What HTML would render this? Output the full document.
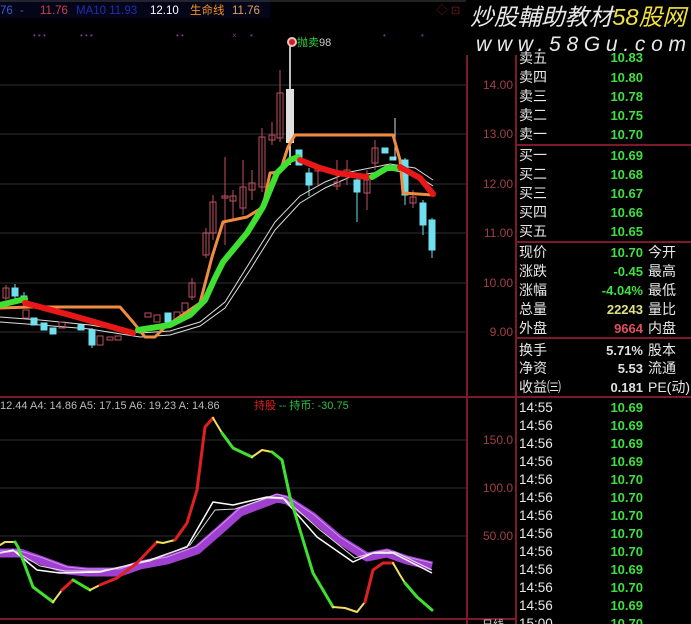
<!DOCTYPE html>
<html><head><meta charset="utf-8"><style>
html,body{margin:0;padding:0;background:#000;width:691px;height:624px;overflow:hidden}
svg{display:block}
text{font-family:"Liberation Sans","Noto Sans CJK SC",sans-serif}
</style></head><body>
<svg width="691" height="624" viewBox="0 0 691 624" xmlns="http://www.w3.org/2000/svg">
<rect width="691" height="624" fill="#000"/>
<rect x="0" y="0" width="270" height="18" fill="#05051a"/>
<line x1="0" y1="1" x2="466" y2="1" stroke="#444" stroke-width="1"/>
<g font-size="11.5">
<text x="0" y="14" fill="#3a5ad0">76</text>
<text x="20" y="14" fill="#666">-</text>
<text x="40" y="14" fill="#d04040">11.76</text>
<text x="76" y="14" fill="#1e2eb0">MA10  11.93</text>
<text x="150" y="14" fill="#fff">12.10</text>
<text x="190" y="14" fill="#f09020">生命线</text>
<text x="232" y="14" fill="#e0a060">11.76</text>
<text x="436" y="14" fill="#701818">◇ ⊡</text>
</g>
<g stroke="#181818" stroke-width="2">
<line x1="0" y1="85" x2="466" y2="85"/><line x1="0" y1="134" x2="466" y2="134"/>
<line x1="0" y1="184" x2="466" y2="184"/><line x1="0" y1="233" x2="466" y2="233"/>
<line x1="0" y1="283" x2="466" y2="283"/><line x1="0" y1="332" x2="466" y2="332"/>
<line x1="0" y1="440" x2="466" y2="440"/><line x1="0" y1="488" x2="466" y2="488"/><line x1="0" y1="536" x2="466" y2="536"/>
</g>
<g stroke="#7a1a2a" stroke-width="2">
<line x1="467" y1="55" x2="467" y2="624"/>
<line x1="516" y1="55" x2="516" y2="624"/>
<line x1="0" y1="397" x2="691" y2="397"/>
<line x1="0" y1="619" x2="516" y2="619"/>
<line x1="516" y1="145" x2="691" y2="145"/>
<line x1="516" y1="242" x2="691" y2="242"/>
<line x1="516" y1="338" x2="691" y2="338"/>
</g>
<g font-size="12" fill="#a04048" text-anchor="end">
<text x="513" y="89">14.00</text><text x="513" y="138">13.00</text><text x="513" y="188">12.00</text>
<text x="513" y="237">11.00</text><text x="513" y="287">10.00</text><text x="513" y="336">9.00</text>
<text x="513" y="444">150.0</text><text x="513" y="492">100.0</text><text x="513" y="540">50.00</text>
</g>
<g fill="#8030a0" font-size="8">
<text x="33" y="38">• • •</text><text x="80" y="38">• • •</text><text x="176" y="38">• •</text>
<text x="232" y="38">×</text><text x="250" y="38">•</text><text x="383" y="38">•</text><text x="421" y="38">•</text>
</g>
<g fill="none" stroke="#ddd" stroke-width="1">
<polyline points="0,317 40,320 90,325 140,333 170,331 200,322 225,302 250,262 275,222 300,196 325,182 350,172 390,164 415,168 433,180"/>
<polyline points="0,322 40,325 90,329 140,337 170,335 200,326 225,308 250,270 275,230 300,203 325,188 350,177 390,170 415,174 433,186"/>
</g>
<g stroke="#c05060" stroke-width="1" fill="none">
<line x1="6" y1="285" x2="6" y2="300"/><rect x="3" y="288" width="6" height="10"/>
<rect x="23" y="310" width="6" height="8"/>
<rect x="59" y="322" width="6" height="6"/><rect x="97" y="336" width="6" height="9"/>
<rect x="107" y="337" width="6" height="3"/><rect x="115" y="336" width="6" height="4"/>
<rect x="145" y="313" width="6" height="4"/><rect x="154" y="315" width="6" height="7"/>
<rect x="174" y="312" width="6" height="11"/><rect x="182" y="303" width="6" height="9"/>
<line x1="192" y1="278" x2="192" y2="300"/><rect x="189" y="283" width="6" height="14"/>
<line x1="206" y1="228" x2="206" y2="258"/><rect x="203" y="233" width="6" height="22"/>
<line x1="213" y1="195" x2="213" y2="240"/><rect x="210" y="202" width="6" height="31"/>
<line x1="225" y1="157" x2="225" y2="245"/><rect x="222" y="196" width="6" height="2"/>
<line x1="233" y1="190" x2="233" y2="220"/><rect x="230" y="196" width="6" height="5"/>
<line x1="243" y1="160" x2="243" y2="215"/><rect x="240" y="187" width="6" height="21"/>
<line x1="252" y1="170" x2="252" y2="200"/><rect x="249" y="183" width="6" height="7"/>
<line x1="262" y1="128" x2="262" y2="192"/><rect x="259" y="137" width="6" height="50"/>
<line x1="272" y1="122" x2="272" y2="145"/><rect x="269" y="135" width="6" height="5"/>
<line x1="280" y1="70" x2="280" y2="142"/><rect x="277" y="93" width="6" height="45"/>
<line x1="318" y1="165" x2="318" y2="185"/><rect x="315" y="167" width="6" height="4"/>
<line x1="337" y1="160" x2="337" y2="190"/><rect x="334" y="182" width="6" height="4"/>
<line x1="347" y1="160" x2="347" y2="185"/><rect x="344" y="170" width="6" height="4"/>
<line x1="367" y1="170" x2="367" y2="210"/><rect x="364" y="180" width="6" height="13"/>
<line x1="375" y1="140" x2="375" y2="170"/><rect x="372" y="148" width="6" height="15"/>
<line x1="413" y1="190" x2="413" y2="208"/><rect x="410" y="197" width="6" height="6"/>
</g>
<g fill="#70e0f0" stroke="#70e0f0" stroke-width="1">
<line x1="15" y1="284" x2="15" y2="300"/><rect x="12" y="288" width="6" height="8"/>
<line x1="24" y1="292" x2="24" y2="306"/><rect x="21" y="296" width="6" height="6"/>
<rect x="31" y="318" width="6" height="7"/><rect x="41" y="323" width="6" height="7"/>
<rect x="50" y="328" width="6" height="6"/><rect x="78" y="325" width="6" height="5"/>
<line x1="92" y1="328" x2="92" y2="348"/><rect x="89" y="330" width="6" height="15"/>
<rect x="165" y="313" width="6" height="9"/>
<rect x="296" y="150" width="6" height="15"/>
<line x1="309" y1="168" x2="309" y2="196"/><rect x="306" y="173" width="6" height="12"/>
<line x1="357" y1="175" x2="357" y2="222"/><rect x="354" y="180" width="6" height="12"/>
<rect x="382" y="148" width="6" height="5"/><rect x="390" y="157" width="6" height="3"/>
<line x1="405" y1="158" x2="405" y2="205"/><rect x="402" y="160" width="6" height="35"/>
<line x1="423" y1="200" x2="423" y2="235"/><rect x="420" y="203" width="6" height="22"/>
<line x1="432" y1="218" x2="432" y2="258"/><rect x="429" y="220" width="6" height="30"/>
</g>
<line x1="290" y1="38" x2="290" y2="165" stroke="#fff" stroke-width="1.5"/>
<rect x="286" y="89" width="8" height="54" fill="#e0e0e0"/>
<line x1="395" y1="118" x2="395" y2="160" stroke="#ddd"/>
<polyline fill="none" stroke="#f08c40" stroke-width="3" stroke-linejoin="round" points="0,308 30,307 120,307 133,322 145,337 155,337 165,327 200,303 212,257 223,222 247,217 263,207 270,173 280,172 288,147 295,135 393,135 400,160 403,193 433,195"/>
<g fill="none" stroke-width="6" stroke-linecap="round" stroke-linejoin="round">
<polyline stroke="#40e030" points="0,305 25,299"/>
<polyline stroke="#e81818" points="25,303 70,315 133,333"/>
<polyline stroke="#40e030" points="138,330 170,325 190,315 205,300 215,278 223,262 247,233 263,207 277,173 290,160 298,157"/>
<polyline stroke="#e81818" points="300,160 320,168 337,173 367,177"/>
<polyline stroke="#40e030" points="372,177 387,168 397,168"/>
<polyline stroke="#e81818" points="400,167 420,178 433,194"/>
</g>
<circle cx="292" cy="42" r="5" fill="#f0c0c0"/><circle cx="292" cy="42" r="3" fill="#d02020"/>
<text x="297" y="46" font-size="11" fill="#30d040">抛卖</text><text x="319" y="46" font-size="11" fill="#ccc">98</text>
<g font-size="11">
<text x="0" y="409" fill="#bbb">12.44  A4: 14.86  A5: 17.15  A6: 19.23  A: 14.86</text>
<text x="254" y="409" fill="#e02020">持股</text><text x="279" y="409" fill="#30c040">-- 持币: -30.75</text>
</g>
<g fill="none" stroke-linejoin="round">
<polyline stroke="#a040d0" stroke-width="9" points="0,553 20,553 40,560 67,570 87,572 120,572 140,565 167,560 197,550 220,530 240,512 277,498 287,500 313,517 340,540 367,557 387,553 407,560 432,566"/>
<polyline stroke="#d090f0" stroke-width="1" points="0,551 20,551 40,557 67,567 87,569 120,569 140,562 167,557 197,546 220,526 240,508 277,494 287,497 313,514 340,537 367,554 387,550 407,557 432,563"/>
<polyline stroke="#fff" stroke-width="1.5" points="0,553 13,550 37,570 60,573 100,572 150,560 187,547 213,502 233,505 267,497 283,498 317,537 353,562 373,553 393,553 432,573"/>
<polyline stroke="#ddd" stroke-width="1" points="0,553 15,551 40,566 65,571 100,571 150,561 190,545 215,510 235,509 267,498 285,499 320,530 355,558 375,552 395,552 432,570"/>
</g>
<g fill="none" stroke-width="3" stroke-linejoin="round" stroke-linecap="round">
<polyline stroke="#f0e060" stroke-width="2" points="0,545 5,542 15,542"/>
<polyline stroke="#40e030" points="15,542 18,547 33,587 53,602"/>
<polyline stroke="#f0e060" stroke-width="2" points="53,602 62,590"/>
<polyline stroke="#e02020" points="62,590 73,580"/>
<polyline stroke="#40e030" points="73,580 90,590"/>
<polyline stroke="#f0e060" stroke-width="2" points="90,590 100,585"/>
<polyline stroke="#e02020" points="100,585 117,578 137,563 157,542"/>
<polyline stroke="#f0e060" stroke-width="2" points="157,542 163,543 175,540"/>
<polyline stroke="#e02020" points="175,540 187,523 197,490 205,427 213,418"/>
<polyline stroke="#f0e060" stroke-width="2" points="213,418 222,433"/>
<polyline stroke="#40e030" points="222,433 233,448 252,457"/>
<polyline stroke="#f0e060" stroke-width="2" points="252,457 262,450 272,452"/>
<polyline stroke="#40e030" points="272,452 282,460 290,497 300,530 313,573 333,607"/>
<polyline stroke="#f0e060" stroke-width="2" points="333,607 345,608 357,612 365,602"/>
<polyline stroke="#e02020" points="365,602 373,570 383,563 393,563"/>
<polyline stroke="#f0e060" stroke-width="2" points="393,563 400,575 405,583"/>
<polyline stroke="#40e030" points="405,583 417,597 432,610"/>
</g>
<text x="470" y="25" font-size="23" font-style="italic" fill="#e8e8e8" textLength="216" lengthAdjust="spacingAndGlyphs">炒股輔助教材<tspan fill="#f0e040">58股网</tspan></text>
<text x="476" y="51" font-size="21" font-style="italic" fill="#e8e8e8" textLength="210" lengthAdjust="spacing">www.58Gu.com</text>
<g font-size="14" fill="#e8e8e8">
<text x="519" y="63">卖五</text><text x="519" y="82">卖四</text><text x="519" y="101">卖三</text><text x="519" y="120">卖二</text><text x="519" y="139">卖一</text>
<text x="519" y="160">买一</text><text x="519" y="179">买二</text><text x="519" y="198">买三</text><text x="519" y="217">买四</text><text x="519" y="236">买五</text>
<text x="519" y="257">现价</text><text x="519" y="276">涨跌</text><text x="519" y="295">涨幅</text><text x="519" y="314">总量</text><text x="519" y="333">外盘</text>
<text x="519" y="355">换手</text><text x="519" y="373">净资</text><text x="519" y="392">收益㈢</text>
<text x="648" y="257">今开</text><text x="648" y="276">最高</text><text x="648" y="295">最低</text><text x="648" y="314">量比</text><text x="648" y="333">内盘</text>
<text x="648" y="355">股本</text><text x="648" y="373">流通</text><text x="648" y="392">PE(动)</text>
</g>
<g font-size="13" font-weight="bold" fill="#40e040" text-anchor="end">
<text x="643" y="62">10.83</text><text x="643" y="82">10.80</text><text x="643" y="101">10.78</text><text x="643" y="120">10.75</text><text x="643" y="139">10.70</text>
<text x="643" y="160">10.69</text><text x="643" y="179">10.68</text><text x="643" y="198">10.67</text><text x="643" y="217">10.66</text><text x="643" y="236">10.65</text>
<text x="643" y="257">10.70</text><text x="643" y="276">-0.45</text><text x="643" y="295">-4.04%</text>
<text x="643" y="314" fill="#e0e080">22243</text><text x="643" y="333" fill="#e05060">9664</text>
<text x="643" y="355" fill="#e0e0e0">5.71%</text><text x="643" y="373" fill="#e0e0e0">5.53</text><text x="643" y="392" fill="#e0e0e0">0.181</text>
</g>
<g font-size="13.5" fill="#e8e8e8">
<text x="519" y="412">14:55</text><text x="519" y="430">14:56</text><text x="519" y="448">14:56</text><text x="519" y="466">14:56</text>
<text x="519" y="484">14:56</text><text x="519" y="502">14:56</text><text x="519" y="520">14:56</text><text x="519" y="538">14:56</text>
<text x="519" y="556">14:56</text><text x="519" y="574">14:56</text><text x="519" y="592">14:56</text><text x="519" y="610">14:56</text>
<text x="519" y="628">15:00</text>
</g>
<g font-size="13" font-weight="bold" fill="#40e040" text-anchor="end">
<text x="643" y="412">10.69</text><text x="643" y="430">10.69</text><text x="643" y="448">10.69</text><text x="643" y="466">10.69</text>
<text x="643" y="484">10.70</text><text x="643" y="502">10.70</text><text x="643" y="520">10.70</text><text x="643" y="538">10.70</text>
<text x="643" y="556">10.70</text><text x="643" y="574">10.69</text><text x="643" y="592">10.70</text><text x="643" y="610">10.69</text>
<text x="643" y="628">10.70</text>
</g>
<text x="482" y="628" font-size="11" fill="#ccc">日线</text>
</svg>
</body></html>
